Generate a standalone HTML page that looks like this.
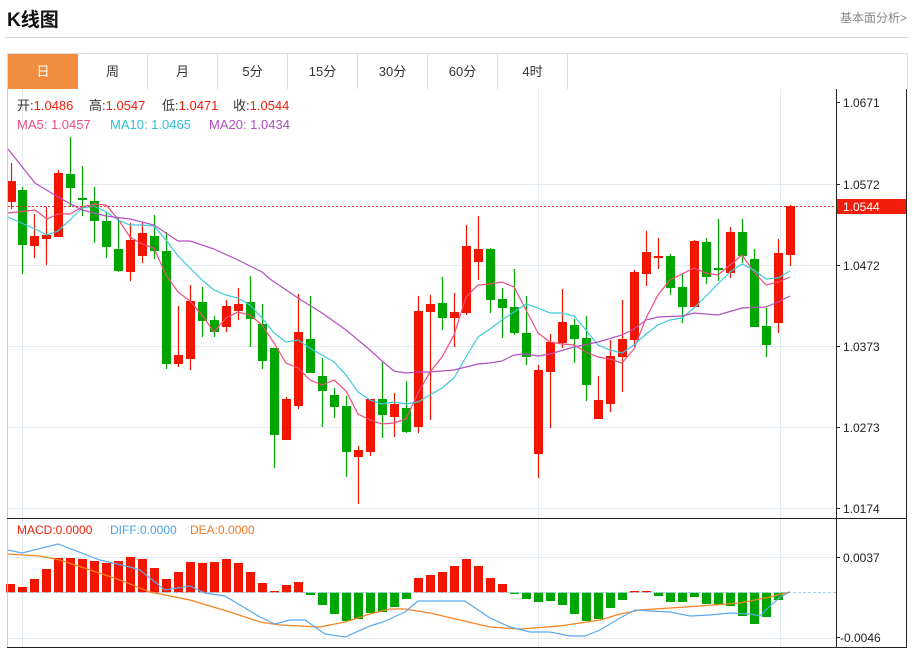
<!DOCTYPE html>
<html><head><meta charset="utf-8">
<style>
body{margin:0;width:913px;height:649px;background:#fff;font-family:"Liberation Sans","Noto Sans CJK SC",sans-serif;overflow:hidden;position:relative}
.t{position:absolute;left:7px;top:5px;font-size:19px;font-weight:bold;color:#111}
.lk{position:absolute;right:6px;top:9px;font-size:12px;color:#888}
.sep{position:absolute;left:5px;top:37px;width:903px;height:1px;background:#d6d6d6}
.tabs{position:absolute;left:7px;top:53px;width:899px;height:35px;border:1px solid #ddd;border-bottom:none}
.tab{position:absolute;top:0;height:35px;width:70px;line-height:35px;text-align:center;font-size:13px;color:#333;border-right:1px solid #ddd;box-sizing:border-box}
.on{background:#f28d3f;color:#fff;border-right:none}
svg{position:absolute;left:0;top:0}
</style></head><body>
<div class="t">K线图</div>
<div class="lk">基本面分析&gt;</div>
<div class="sep"></div>
<div class="tabs">
<div class="tab on" style="left:0">日</div>
<div class="tab" style="left:70px">周</div>
<div class="tab" style="left:140px">月</div>
<div class="tab" style="left:210px">5分</div>
<div class="tab" style="left:280px">15分</div>
<div class="tab" style="left:350px">30分</div>
<div class="tab" style="left:420px">60分</div>
<div class="tab" style="left:490px">4时</div>
</div>
<svg id="s" width="913" height="649" xmlns="http://www.w3.org/2000/svg">
<g stroke="#e2ebf2" stroke-width="1">
<line x1="8" y1="184.5" x2="836" y2="184.5"/><line x1="8" y1="265.5" x2="836" y2="265.5"/><line x1="8" y1="346.5" x2="836" y2="346.5"/><line x1="8" y1="427.5" x2="836" y2="427.5"/><line x1="8" y1="508.5" x2="836" y2="508.5"/>
<line x1="22.5" y1="89" x2="22.5" y2="648"/><line x1="538.5" y1="89" x2="538.5" y2="648"/><line x1="780.5" y1="89" x2="780.5" y2="648"/>
<line x1="8" y1="557.5" x2="836" y2="557.5"/><line x1="8" y1="638.5" x2="836" y2="638.5"/>
</g>
<g id="c"></g>
<line x1="8" y1="592.5" x2="836" y2="592.5" stroke="#9ed3ea" stroke-dasharray="3,2"/>
<g id="m"></g>
<line x1="8" y1="206.5" x2="836" y2="206.5" stroke="#f03030" stroke-dasharray="2,2"/>
<line x1="7.5" y1="89" x2="7.5" y2="648" stroke="#ccc"/>
<line x1="906.5" y1="89" x2="906.5" y2="648" stroke="#222"/>
<line x1="836.5" y1="89" x2="836.5" y2="648" stroke="#222"/>
<line x1="7" y1="518.5" x2="907" y2="518.5" stroke="#222"/>
<line x1="7" y1="647.5" x2="907" y2="647.5" stroke="#222"/>
<g stroke="#222"><line x1="836" y1="102.5" x2="840" y2="102.5"/><line x1="836" y1="184.5" x2="840" y2="184.5"/><line x1="836" y1="265.5" x2="840" y2="265.5"/><line x1="836" y1="346.5" x2="840" y2="346.5"/><line x1="836" y1="427.5" x2="840" y2="427.5"/><line x1="836" y1="508.5" x2="840" y2="508.5"/><line x1="836" y1="557.5" x2="840" y2="557.5"/><line x1="836" y1="637.5" x2="840" y2="637.5"/></g>
<g font-size="12" fill="#222" font-family="Liberation Sans,sans-serif">
<text x="843" y="107">1.0671</text><text x="843" y="189">1.0572</text><text x="843" y="270">1.0472</text><text x="843" y="351">1.0373</text><text x="843" y="432">1.0273</text><text x="843" y="513">1.0174</text><text x="843" y="562">0.0037</text><text x="840" y="642">-0.0046</text>
</g>
<rect x="837" y="199" width="69" height="15" fill="#f21d0a"/>
<text x="843" y="211" font-size="12" fill="#fff">1.0544</text>
<g font-size="13">
<text x="17" y="110" fill="#333">开:<tspan fill="#f21d0a">1.0486</tspan></text>
<text x="89" y="110" fill="#333">高:<tspan fill="#f21d0a">1.0547</tspan></text>
<text x="162" y="110" fill="#333">低:<tspan fill="#f21d0a">1.0471</tspan></text>
<text x="233" y="110" fill="#333">收:<tspan fill="#f21d0a">1.0544</tspan></text>
<text x="17" y="129" fill="#ee4d7f">MA5: 1.0457</text>
<text x="110" y="129" fill="#2ec0d8">MA10: 1.0465</text>
<text x="209" y="129" fill="#b04cc0">MA20: 1.0434</text>
</g>
<g font-size="12">
<text x="17" y="534" fill="#f21d0a">MACD:0.0000</text><text x="110" y="534" fill="#4aa3e8">DIFF:0.0000</text><text x="190" y="534" fill="#f07820">DEA:0.0000</text>
</g>
</svg>
<script>
var C=[[11,181,202,163,209,'r'],[22,190,245,187,274,'g'],[34,236,246,214,258,'r'],[46,235,239,207,265,'r'],[58,173,237,170,237,'r'],[70,174,188,137,207,'g'],[82,198,200,166,216,'g'],[94,201,221,187,243,'g'],[106,221,247,212,258,'g'],[118,249,271,217,272,'g'],[130,240,272,223,281,'r'],[142,233,256,223,263,'r'],[154,236,251,215,259,'g'],[166,251,364,232,369,'g'],[178,355,364,306,367,'r'],[190,301,359,285,370,'r'],[202,302,321,287,337,'g'],[214,320,332,316,337,'g'],[226,306,327,300,332,'r'],[238,304,311,288,320,'r'],[250,302,319,276,347,'g'],[262,324,361,304,369,'g'],[274,348,435,348,468,'g'],[286,399,440,397,440,'r'],[298,332,406,294,409,'r'],[310,339,373,296,373,'g'],[322,376,391,358,427,'g'],[334,395,407,388,418,'g'],[346,406,452,396,477,'g'],[358,450,457,446,504,'r'],[370,399,452,399,456,'r'],[382,399,415,362,438,'g'],[394,404,417,393,437,'r'],[406,408,432,381,433,'g'],[418,311,427,296,433,'r'],[430,304,312,295,420,'r'],[442,303,318,277,330,'g'],[454,312,318,293,347,'r'],[466,246,313,225,315,'r'],[478,249,262,216,280,'r'],[490,249,300,248,313,'g'],[502,299,308,288,338,'g'],[514,307,333,269,335,'g'],[526,333,357,296,365,'g'],[538,370,454,365,478,'r'],[550,342,372,334,428,'r'],[562,322,343,289,348,'r'],[574,325,339,319,363,'g'],[586,338,385,316,401,'g'],[598,400,419,376,419,'r'],[610,356,404,340,412,'r'],[622,339,357,300,392,'r'],[634,272,340,270,347,'r'],[646,252,274,231,286,'r'],[658,256,257,238,269,'r'],[670,256,288,254,295,'g'],[682,287,307,274,323,'g'],[694,241,307,240,307,'r'],[706,242,277,238,284,'g'],[718,268,270,219,281,'g'],[730,232,273,227,278,'r'],[742,232,256,219,263,'g'],[754,259,327,249,327,'g'],[766,326,345,308,357,'g'],[778,253,323,239,333,'r'],[790,206,255,205,266,'r']];
var R='#f21500',G='#00a600',h='';
C.forEach(function(c){var col=c[5]=='r'?R:G;h+='<line x1="'+(c[0]+.5)+'" y1="'+c[3]+'" x2="'+(c[0]+.5)+'" y2="'+c[4]+'" stroke="'+col+'" stroke-width="1.2"/>';h+='<rect x="'+(c[0]-4)+'" y="'+c[1]+'" width="9" height="'+Math.max(2,c[2]-c[1])+'" fill="'+col+'"/>';});
var B=[[11,584],[23,587],[35,579],[47,569],[59,558],[71,558],[83,559],[95,561],[107,563],[119,561],[131,557],[143,559],[155,568],[167,579],[179,572],[191,562],[203,563],[215,562],[227,559],[239,563],[251,572],[263,583],[275,591],[287,585],[299,582],[311,595],[323,605],[335,614],[347,621],[359,619],[371,613],[383,612],[395,607],[407,599],[419,578],[431,575],[443,572],[455,566],[467,559],[479,566],[491,578],[503,584],[515,593],[527,599],[539,602],[551,601],[563,605],[575,614],[587,621],[599,619],[611,608],[623,600],[635,591],[647,591],[659,596],[671,602],[683,602],[695,597],[707,604],[719,605],[731,606],[743,616],[755,624],[767,617],[779,600]];
B.forEach(function(b){var z=592.5,col=b[1]<z?R:G;var y=Math.min(b[1],z),hh=Math.abs(b[1]-z);if(hh<1.5)hh=1.5;h+='<rect x="'+(b[0]-5)+'" y="'+y+'" width="9" height="'+hh+'" fill="'+col+'"/>';});
document.getElementById('c').innerHTML=h;
function pl(p,col){return '<polyline fill="none" stroke="'+col+'" stroke-width="1.2" points="'+p+'"/>';}
var m='';
m+=pl('8,213 35,210 47,219 58,214 70,214 82,207 94,204 106,205 118,219 130,237 142,244 154,248 166,275 178,292 190,301 202,315 214,332 226,318 238,312 250,315 262,325 274,343 286,363 298,368 310,380 322,385 334,380 346,391 358,414 370,420 382,424 394,423 406,419 418,393 430,372 442,357 454,335 466,297 478,285 490,284 502,282 514,287 526,310 538,333 550,342 562,344 574,345 586,352 598,357 610,359 622,363 634,349 646,318 658,295 670,280 682,274 694,268 706,273 718,275 730,265 742,255 754,272 766,285 778,282 790,277','#ee4d7f');
m+=pl('8,217 35,229 47,235 58,231 70,220 82,208 94,206 106,212 118,220 130,225 142,225 154,226 166,240 178,256 190,268 202,280 214,290 226,295 238,298 250,305 262,318 274,333 286,342 298,340 310,348 322,355 334,362 346,375 358,392 370,400 382,404 394,402 406,404 418,402 430,395 442,388 454,378 466,357 478,337 490,329 502,320 514,312 526,304 538,308 550,313 562,313 574,316 586,330 598,345 610,350 622,353 634,345 646,334 658,325 670,320 682,318 694,308 706,296 718,284 730,272 742,264 754,270 766,279 778,278 790,271','#3cc8de');
m+=pl('8,149 35,183 58,197 82,210 106,216 130,219 154,225 178,241 190,241 214,249 238,260 262,272 270,279 298,298 322,313 346,330 370,350 382,361 394,371 406,373 418,372 430,372 454,370 478,364 490,363 502,361 514,355 526,354 538,356 550,354 574,347 598,342 622,335 634,329 646,320 658,317 682,316 694,313 718,315 742,308 766,307 778,302 790,296','#b44fc4');
m+=pl('8,554 40,556 60,560 90,570 120,580 150,592 190,600 230,612 260,622 280,625 300,626 320,627 345,622 370,614 390,609 405,609 430,613 460,620 490,627 520,629 560,626 600,620 620,614 640,610 700,606 740,603 770,597 790,592','#f58220');
m+=pl('8,550 22,553 58,544 100,560 130,567 140,570 165,590 190,586 205,593 225,596 240,605 260,617 275,624 290,620 305,620 325,634 345,637 370,626 383,622 405,612 418,601 430,601 465,601 490,618 510,627 530,632 550,632 570,636 585,636 600,630 620,618 635,610 650,611 670,612 690,616 710,615 730,613 750,614 760,616 770,606 780,597 790,592','#5aaaf0');
document.getElementById('m').innerHTML=m;
</script>
</body></html>
